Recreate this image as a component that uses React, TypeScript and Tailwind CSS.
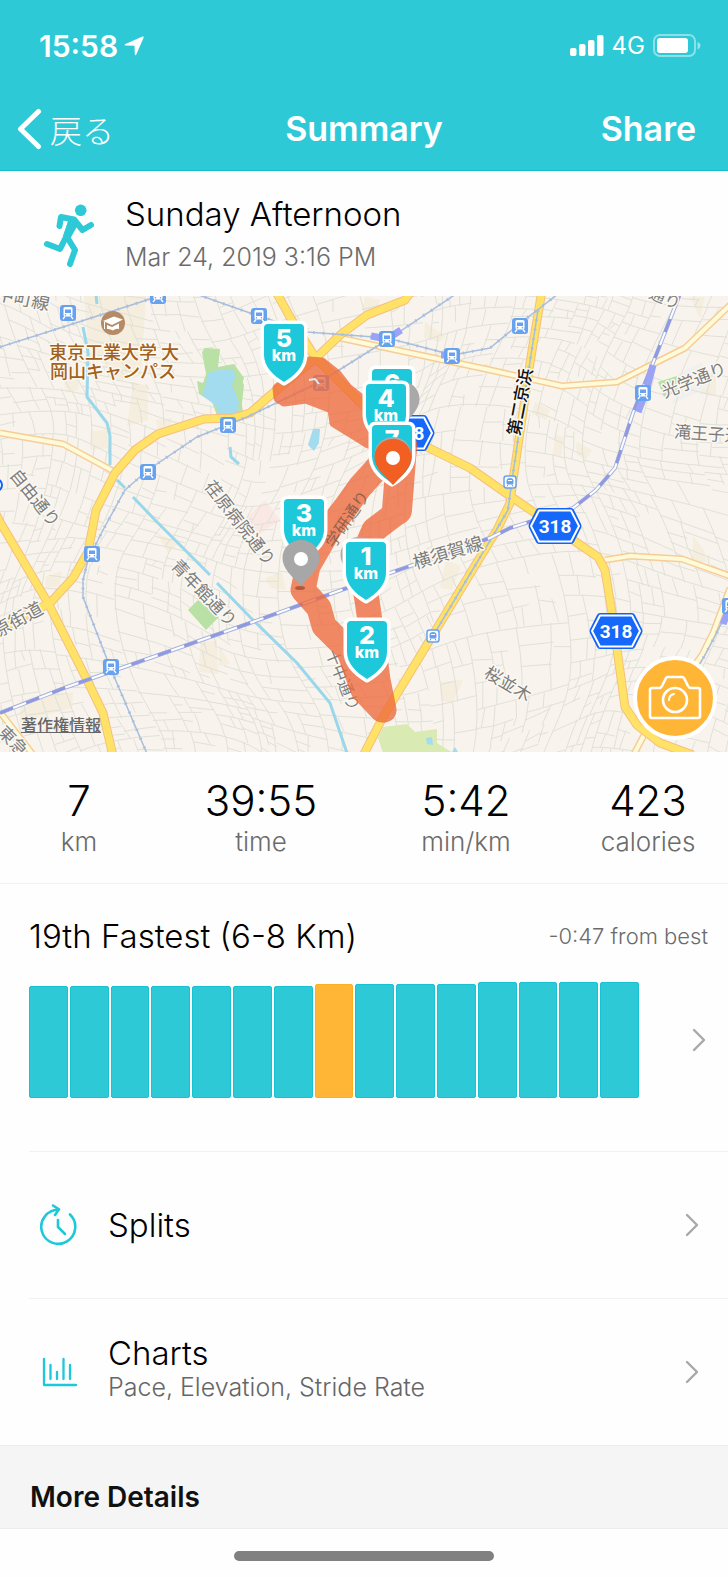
import type { ReactNode } from "react";

type Point = [number, number];

/* ---------- Street network: recursive blocks bent by a smooth field ---------- */

function makeRandom(seed: number) {
  let s = seed;
  return () => {
    s = (s * 1664525 + 1013904223) % 4294967296;
    return s / 4294967296;
  };
}

function warp(x: number, y: number): Point {
  const dx = 26 * Math.sin(y / 61 + x / 170) + 9 * Math.sin(x / 29 + 1.3);
  const dy = 30 * Math.sin(x / 83 - y / 210 + 0.6) + 8 * Math.cos(y / 31 + x / 57);
  return [x + dx, y + dy];
}

function buildStreets() {
  const random = makeRandom(77);
  const parts: string[] = [];
  const line = (x1: number, y1: number, x2: number, y2: number) => {
    const n = Math.max(1, Math.round(Math.hypot(x2 - x1, y2 - y1) / 16));
    let d = "";
    for (let i = 0; i <= n; i++) {
      const [x, y] = warp(x1 + ((x2 - x1) * i) / n, y1 + ((y2 - y1) * i) / n);
      d += `${i === 0 ? "M" : "L"}${x.toFixed(1)} ${y.toFixed(1)}`;
    }
    parts.push(d);
  };
  const split = (x: number, y: number, w: number, h: number) => {
    const limit = 15 + random() * 17;
    if (w < limit && h < limit) return;
    const t = 0.35 + random() * 0.3;
    const skew = (random() - 0.5) * 6;
    if (w > h) {
      line(x + w * t, y, x + w * t + skew, y + h * (random() < 0.15 ? 0.6 : 1));
      split(x, y, w * t, h);
      split(x + w * t, y, w * (1 - t), h);
    } else {
      line(x, y + h * t, x + w * (random() < 0.15 ? 0.6 : 1), y + h * t + skew);
      split(x, y, w, h * t);
      split(x, y + h * t, w, h * (1 - t));
    }
  };
  split(-60, 230, 860, 590);
  return parts.join("");
}

const streets = buildStreets();

/* ---------- Map data ---------- */

const mainRoads = [
  "M0 631L24 616L50 603L73 578L88 552L96 510L115 473L135 450L158 434L204 419L233 418L250 413L273 393L317 357L340 335L367 315L405 300L412 290",
  "M275 290L290 317L315 357L363 405L427 447L470 468L513 498L535 513L573 540L598 557L605 570L612 613L625 707L637 725L660 743L693 755",
  "M542 290L530 363L512 487L510 503L497 530L490 541L383 717L363 756",
  "M-4 514L0 522L48 603L87 680L103 713L113 756",
];

const sideRoads = [
  "M0 433L63 444L115 472",
  "M340 338L490 370L562 386L617 382L685 348L730 305",
  "M605 560L630 556L682 559L730 576",
  "M730 588L713 633L702 655L643 737L633 756",
  "M0 712L34 756",
];

const rivers = [
  "M96 294L97 304",
  "M83 327L88 352L87 397L107 423L110 436L110 465",
  "M117 480L125 488M133 497L155 520L210 575M217 583L250 617L297 663L330 703L348 756",
  "M230 447L231 457L239 464",
];

const rails = [
  "M0 347L60 328L150 299L160 294",
  "M196 294L250 313L307 332L387 338L453 355L490 348L518 325L558 294",
  "M456 294L387 340L320 382L247 417L197 437L148 470L125 490L103 530L88 560L83 580L83 597L110 667L148 756",
  "M538 310L524 400L512 480L508 510L494 534L433 636",
  "M730 606L713 640L700 664",
];

const jrLine =
  "M0 713L67 687L110 672L250 623L347 588L413 565L490 538L510 528L573 508L596 490L615 468L633 413L653 363L680 294";

const stations: Point[] = [
  [68, 313], [158, 296], [228, 425], [148, 472], [259, 316], [387, 339], [452, 356],
  [520, 326], [643, 393], [92, 554], [111, 667], [730, 606],
];

type Label = { text: string; x: number; y: number; angle: number; size: number };

const labels: Label[] = [
  { text: "自由通り", x: 35, y: 498, angle: 51, size: 17 },
  { text: "荏原病院通り", x: 240, y: 523, angle: 52, size: 17 },
  { text: "青年館通り", x: 204, y: 593, angle: 46, size: 17 },
  { text: "原街道", x: 18, y: 620, angle: -29, size: 18 },
  { text: "横須賀線", x: 448, y: 553, angle: -17, size: 18 },
  { text: "十中通り", x: 343, y: 680, angle: 68, size: 16 },
  { text: "桜並木", x: 508, y: 684, angle: 31, size: 17 },
  { text: "光学通り", x: 694, y: 380, angle: -22, size: 17 },
  { text: "滝王子通", x: 708, y: 434, angle: 4, size: 17 },
  { text: "中町線", x: 23, y: 299, angle: 12, size: 18 },
  { text: "通り", x: 665, y: 298, angle: 22, size: 16 },
  { text: "東急", x: 13, y: 741, angle: 46, size: 17 },
];

/* ---------- Map pieces ---------- */

function Station({ x, y }: { x: number; y: number }) {
  return (
    <g transform={`translate(${x} ${y})`}>
      <rect x="-8" y="-8" width="16" height="16" rx="3" fill="#68a2ee" />
      <path d="M-3-6H3Q4.500-6 4.500-4.500V2Q4.500 3.500 3 3.500H-3Q-4.500 3.500-4.500 2V-4.500Q-4.500-6-3-6Z" fill="#fff" />
      <rect x="-3" y="-3.500" width="6" height="3.500" fill="#68a2ee" />
      <circle cx="-2.500" cy="1.800" r=".8" fill="#68a2ee" />
      <circle cx="2.500" cy="1.800" r=".8" fill="#68a2ee" />
      <path d="M-3 3.500L-5 6M3 3.500L5 6" stroke="#fff" strokeWidth="1.300" />
    </g>
  );
}

function MetroStation({ x, y }: { x: number; y: number }) {
  return (
    <g transform={`translate(${x} ${y})`}>
      <rect x="-6" y="-6" width="12" height="12" rx="2.500" fill="#fff" stroke="#68a2ee" strokeWidth="1.500" />
      <path d="M-3.500 1V-1Q-3.500-4 0-4T3.500-1V1Q3.500 2.500 2 2.500H-2Q-3.500 2.500-3.500 1Z" fill="#68a2ee" />
      <path d="M-2-1.500H2" stroke="#fff" strokeWidth="1" />
      <path d="M-3 4.500L-2 2.500M3 4.500L2 2.500" stroke="#68a2ee" strokeWidth="1" />
    </g>
  );
}

function RouteShield({ x, y }: { x: number; y: number }) {
  return (
    <g transform={`translate(${x} ${y})`}>
      <path d="M-16-18H16Q18-18 19-16L26-2Q27 0 26 2L19 16Q18 18 16 18H-16Q-18 18-19 16L-26 2Q-27 0-26-2L-19-16Q-18-18-16-18Z" fill="#1263f5" />
      <path d="M-16-15.500H16L24 0L16 15.500H-16L-24 0Z" fill="#1568fa" stroke="#fff" strokeWidth="2" strokeLinejoin="round" />
      <text y="7" textAnchor="middle" className="fill-white font-[Roboto,sans-serif] text-[19px] font-bold">
        318
      </text>
    </g>
  );
}

function KmMarker({ x, y, n }: { x: number; y: number; n: number }) {
  return (
    <g transform={`translate(${x} ${y})`}>
      <path
        d="M-16 3H16Q20 3 20 7V34C20 46 10 55 0 61C-10 55-20 46-20 34V7Q-20 3-16 3Z"
        fill="#1cc8d9"
        stroke="#fff"
        strokeWidth="7"
        strokeLinejoin="round"
        paintOrder="stroke"
      />
      <text y="26" textAnchor="middle" className="fill-white text-[25px] font-extrabold">
        {n}
      </text>
      <text y="40" textAnchor="middle" className="fill-white text-[16px] font-extrabold">
        km
      </text>
    </g>
  );
}

function Pin({ x, y, color }: { x: number; y: number; color: string }) {
  return (
    <g transform={`translate(${x} ${y})`}>
      <path d="M0-19C10.500-19 18.500-11 18.500-1C18.500 10 9 17 0 27C-9 17-18.500 10-18.500-1C-18.500-11-10.500-19 0-19Z" fill={color} />
      <circle r="7" fill="#fff" />
    </g>
  );
}

function RouteMap() {
  return (
    <svg
      viewBox="0 296 728 456"
      className="block h-auto w-full bg-[#f8f4ed] font-[Inter,'Noto_Sans_CJK_JP',sans-serif]"
      role="img"
      aria-label="Route map"
    >
      <g fill="#f5eddd">
        <path d="M84 296H146L141 376L118 381L88 345Z" />
        <path d="M133 382L148 386V420L127 426Z" />
        <path d="M64 380L80 376L78 390L66 393Z" />
        <path d="M92 431L108 430L109 448L90 450Z" />
        <path d="M156 420L172 418L170 428L158 430Z" />
        <path d="M200 643L217 640L218 674L199 672ZM219 645L230 664L219 666Z" />
        <path d="M156 532L178 544L168 553Z" />
        <path d="M20 700L73 692L72 708L20 722Z" />
        <path d="M365 297L380 300L376 312L362 310ZM425 322L445 336L440 342L424 338Z" />
        <path d="M535 402L550 410L546 420L532 414ZM576 442L592 450L586 460L577 455ZM555 435L564 437L561 457L553 455Z" />
        <path d="M440 682L463 680L452 704L441 700ZM446 560L461 566L452 590L440 588Z" />
        <path d="M693 536L704 550L707 562L692 562ZM700 375L716 372L716 396L700 394ZM690 297L705 297L700 318Z" />
        <path d="M265 578L282 572L286 590L270 588ZM45 577L62 571L60 586L46 588Z" />
      </g>
      <path d="M247 517L265 500L280 520L258 535Z" fill="#f9e8e4" />
      <path d="M678 374L702 362L708 388L672 404Z" fill="#f0f0ee" />
      <path d={streets} fill="none" stroke="#e0e1d8" strokeWidth="1" strokeLinejoin="round" />

      <g fill="#b9e0a5">
        <path d="M202 352L205 348L220 349L218 367L234 364L244 378L240 390L243 415L218 418L212 402L199 394L197 381L203 383L206 374Z" />
        <path d="M238 372L244 385L241 412L238 400Z" />
        <path d="M658 382L677 376L682 390L664 397Z" />
        <path d="M188 610L198 600L219 617L206 630Z" />
      </g>
      <path d="M378 738L383 727L407 724L415 732L437 729V743L458 756H384Z" fill="#d9ebb2" />
      <g fill="#a3dbef">
        <path d="M208 374L212 371L232 369L236 376L232 385L239 402L237 415H219L216 406L202 395L205 386Z" />
        <path d="M313 429H320L319 443L314 451L308 445Z" />
        <path d="M426 738L432 737L433 745L427 744ZM452 752L455 747L458 752Z" />
      </g>
      <g fill="none" stroke="#9ad7ea" strokeWidth="3">
        {rivers.map((d) => (
          <path key={d} d={d} />
        ))}
      </g>

      <g fill="none" stroke="#f6cd98" strokeWidth="7" strokeLinejoin="round">
        {sideRoads.map((d) => (
          <path key={d} d={d} />
        ))}
      </g>
      <g fill="none" stroke="#fffbd9" strokeWidth="4" strokeLinejoin="round">
        {sideRoads.map((d) => (
          <path key={d} d={d} />
        ))}
      </g>
      <g fill="none" stroke="#f5bf80" strokeWidth="9" strokeLinejoin="round">
        {mainRoads.map((d) => (
          <path key={d} d={d} />
        ))}
      </g>
      <g fill="none" stroke="#ffe266" strokeWidth="7" strokeLinejoin="round">
        {mainRoads.map((d) => (
          <path key={d} d={d} />
        ))}
      </g>

      <g fill="none" stroke="#a9bedd" strokeWidth="1.500">
        {rails.map((d) => (
          <path key={d} d={d} />
        ))}
      </g>
      <g fill="none" stroke="#a9bedd" strokeWidth="3" strokeDasharray="1.500 8">
        {rails.map((d) => (
          <path key={d} d={d} />
        ))}
      </g>
      <path d={jrLine} fill="none" stroke="#a6b2de" strokeWidth="4" />
      <path d={jrLine} fill="none" stroke="#fff" strokeWidth="2" />
      <path d={jrLine} fill="none" stroke="#9098e0" strokeWidth="3" strokeDasharray="14 14" />
      <path d="M653 365L646 392L638 412" stroke="#9ba3f5" strokeWidth="7" fill="none" />
      <path d="M371 336L387 339L401 330" stroke="#9ba3f5" strokeWidth="7" fill="none" />
      <path d="M441 355L452 355M728 612L723 624" stroke="#9ba3f5" strokeWidth="7" fill="none" />

      {stations.map(([x, y]) => (
        <Station key={`${x}-${y}`} x={x} y={y} />
      ))}
      <Station x={321} y={383} />
      <MetroStation x={510} y={482} />
      <MetroStation x={433} y={636} />

      <circle cx="113" cy="323" r="12" fill="#b58a64" />
      <path d="M103 321L114 316.500L123 319.500L112 325Z" fill="#fff" />
      <path d="M107 325L112 327L119 323.500L119 329Q116 328 113 330.500Q110 328.500 107 329Z" fill="#fff" />
      <path d="M104.500 322V329" stroke="#fff" strokeWidth="1" />
      <g
        textAnchor="middle"
        fill="#a1611d"
        stroke="#fdf9f0"
        strokeWidth="3"
        paintOrder="stroke"
        strokeLinejoin="round"
        className="font-['Noto_Sans_CJK_JP',sans-serif] text-[18px] font-medium"
      >
        <text x="114" y="359">東京工業大学 大</text>
        <text x="113" y="378">岡山キャンパス</text>
      </g>

      <circle cx="-4" cy="485" r="6" fill="#fff" stroke="#1263f5" strokeWidth="2" />
      <RouteShield x={408} y={433} />
      <RouteShield x={555} y={526} />
      <RouteShield x={616} y={631} />

      <g
        textAnchor="middle"
        fill="#7d7d7d"
        stroke="#fbf8f2"
        strokeWidth="3"
        paintOrder="stroke"
        strokeLinejoin="round"
        className="font-['Noto_Sans_CJK_JP',sans-serif]"
      >
        {labels.map((l) => (
          <text key={l.text} transform={`translate(${l.x} ${l.y}) rotate(${l.angle})`} y="6" fontSize={l.size}>
            {l.text}
          </text>
        ))}
        <text transform="translate(520 402) rotate(-79)" y="6" fill="#111" className="text-[17px] font-medium">
          第二京浜
        </text>
      </g>

      <g opacity=".78" fill="none" stroke="#ee6a3d" strokeLinecap="round" strokeLinejoin="round">
        <path
          d="M277 388L290 378L309 361L322 362L337 374L348 388L363 400L385 425L400 452L368 444L352 434L334 423L332 409L306 399L284 402L278 398Z"
          fill="#ee6a3d"
          strokeWidth="9"
        />
        <path d="M388 456L360 487L345 508L331 526L308 566L303 590L319 608L324 626L349 651L363 690L382 710" strokeWidth="25" />
        <path d="M405 446L398 485L395 514L374 530L360 562L367 600L374 650L378 680L384 710" strokeWidth="25" />
        <path d="M402 446L397 510" strokeWidth="30" />
      </g>
      <path d="M309 380L315 379L319 384" fill="none" stroke="#d9eef5" strokeWidth="2" />
      <text
        transform="translate(347 519) rotate(-56)"
        y="6"
        textAnchor="middle"
        fill="#6b5046"
        opacity=".7"
        className="font-['Noto_Sans_CJK_JP',sans-serif] text-[16px]"
      >
        学研通り
      </text>

      <KmMarker x={284} y={321} n={5} />
      <KmMarker x={392} y={366} n={6} />
      <Pin x={401} y={400} color="#a9a9a9" />
      <KmMarker x={386} y={381} n={4} />
      <KmMarker x={392} y={422} n={7} />
      <Pin x={393} y={456} color="#a9a9a9" />
      <Pin x={393} y={458} color="#f15f22" />
      <KmMarker x={304} y={496} n={3} />
      <ellipse cx="300" cy="588" rx="5" ry="2" fill="#ad5b3e" />
      <Pin x={301} y={559} color="#a7a7a7" />
      <Pin x={359} y={556} color="#a9a9a9" />
      <KmMarker x={366} y={539} n={1} />
      <KmMarker x={367} y={618} n={2} />
    </svg>
  );
}

/* ---------- Icons ---------- */

function RunnerIcon() {
  return (
    <svg viewBox="0 0 50 64" className="h-16 w-[50px] shrink-0" fill="none" stroke="#2ec9d7" strokeWidth="6" strokeLinecap="round" strokeLinejoin="round" aria-hidden="true">
      <circle cx="36.700" cy="7.300" r="5.800" fill="#2ec9d7" stroke="none" />
      <path d="M15.500 23L17 14L30 16.500L38.500 27L47 22" />
      <path d="M20 13.500L33 15.500L35 20L25.500 37L19 33L24 18Z" fill="#2ec9d7" stroke="none" />
      <path d="M27 20L22 34L16 46L3 41" />
      <path d="M23 34L31 47L26 61" />
    </svg>
  );
}

function Chevron() {
  return (
    <svg viewBox="0 0 14 24" className="h-6 w-3.5 shrink-0" fill="none" stroke="#a8a8a8" strokeWidth="2.400" strokeLinecap="round" strokeLinejoin="round" aria-hidden="true">
      <path d="M2 2L12 12L2 22" />
    </svg>
  );
}

function SplitsIcon() {
  return (
    <svg viewBox="0 0 38 42" className="h-[42px] w-[38px]" fill="none" stroke="#1cc8d9" strokeWidth="2.600" strokeLinecap="round" strokeLinejoin="round" aria-hidden="true">
      <path d="M31 10.500A17 17 0 1 1 19 5.800" />
      <path d="M14 1.500L20 5.300L16 11" />
      <path d="M19 16V23L26 30" />
    </svg>
  );
}

function ChartsIcon() {
  return (
    <svg viewBox="-3 0 38 30" className="h-[30px] w-[38px]" fill="none" stroke="#1cc8d9" strokeWidth="2.300" strokeLinecap="round" strokeLinejoin="round" aria-hidden="true">
      <path d="M2 2V28H34M8.500 8V22M15 15V22M21.500 2V22M28 8V22" />
    </svg>
  );
}

function CameraIcon() {
  return (
    <svg viewBox="0 0 54 46" className="h-[46px] w-[54px]" fill="none" stroke="#fff" strokeWidth="2.600" strokeLinecap="round" strokeLinejoin="round" aria-hidden="true">
      <path d="M4 13H11Q13 13 14 11L17 5Q18 2 20 2H34Q36 2 37 5L40 11Q41 13 43 13H50Q52 13 52 15V41Q52 43 50 43H4Q2 43 2 41V15Q2 13 4 13Z" />
      <circle cx="27" cy="25" r="12" />
      <path d="M21 25Q21 20 26 19" strokeWidth="2" />
    </svg>
  );
}

function SignalIcon() {
  return (
    <svg viewBox="0 0 34 22" className="h-[22px] w-[34px]" fill="#fff" aria-hidden="true">
      <rect x="0" y="13" width="6.500" height="8" rx="2" />
      <rect x="9" y="9" width="6.500" height="12" rx="2" />
      <rect x="18" y="5" width="6.500" height="16" rx="2" />
      <rect x="27" y="0" width="6.500" height="21" rx="2" />
    </svg>
  );
}

function BatteryIcon() {
  return (
    <svg viewBox="0 0 48 24" className="h-6 w-12" aria-hidden="true">
      <rect x="1" y="1" width="41" height="21" rx="6" fill="none" stroke="#fff" strokeOpacity=".45" strokeWidth="2" />
      <rect x="4" y="4" width="31" height="15" rx="3" fill="#fff" />
      <path d="M44.500 8Q47.500 9 47.500 11.500T44.500 15.500Z" fill="#fff" fillOpacity=".5" />
    </svg>
  );
}

/* ---------- Page ---------- */

const stats = [
  { value: "7", unit: "km" },
  { value: "39:55", unit: "time" },
  { value: "5:42", unit: "min/km" },
  { value: "423", unit: "calories" },
];

const runs = [112, 112, 112, 112, 112, 112, 112, 114, 114, 114, 114, 116, 116, 116, 116];
const currentRun = 7;

function DetailRow({ icon, title, note }: { icon: ReactNode; title: string; note?: string }) {
  return (
    <a href="#" className="ml-[29px] flex h-[147px] items-center border-t border-[#f1f1f1] pr-[29px] pl-2.5">
      <span className="flex w-[69px] shrink-0">{icon}</span>
      <span className={note ? "flex grow flex-col pb-2.5" : "flex grow flex-col"}>
        <span className="text-[33px] leading-10 font-light">{title}</span>
        {note && <span className="text-[25px] leading-7 font-light text-[#666]">{note}</span>}
      </span>
      <Chevron />
    </a>
  );
}

export default function App() {
  return (
    <div className="flex min-h-screen flex-col bg-[#fefefe] font-[Inter,'Noto_Sans_CJK_JP',sans-serif] text-black">
      <header className="border-b border-[#14c0d0] bg-[#2ec9d7] text-white">
        <div className="flex items-center justify-between pt-[26px] pr-[27px] pl-[39px]">
          <div className="flex items-center gap-1.5">
            <span className="text-[30px] leading-10 font-semibold">15:58</span>
            <svg viewBox="0 0 20 20" className="h-5 w-5" fill="#fff" aria-hidden="true">
              <path d="M18.500 .6Q20.200 0 19.600 1.700L12.300 18.500Q11.300 20.300 10.800 18.300L10.500 9.700L1.700 9.500Q-.6 9 1.500 7.900Z" />
            </svg>
          </div>
          <div className="flex items-center gap-2">
            <SignalIcon />
            <span className="text-[24px] leading-10">4G</span>
            <BatteryIcon />
          </div>
        </div>
        <nav className="grid grid-cols-[1fr_auto_1fr] items-center pt-[42px] pb-5">
          <button type="button" className="flex items-center gap-[7px] justify-self-start pl-[17px] text-[32px] leading-7 font-light">
            <svg viewBox="0 0 26 42" className="h-[42px] w-[26px]" fill="none" stroke="#fff" strokeWidth="5" strokeLinecap="round" strokeLinejoin="round" aria-hidden="true">
              <path d="M21.500 3.500L3.500 21L21.500 38.500" />
            </svg>
            <span className="font-['Noto_Sans_CJK_JP',sans-serif]">戻る</span>
          </button>
          <h1 className="text-[34px] leading-7 font-semibold">Summary</h1>
          <button type="button" className="justify-self-end pr-8 text-[34px] leading-7 font-semibold">
            Share
          </button>
        </nav>
      </header>

      <section className="flex items-center gap-[31px] pt-[21px] pb-[18px] pl-11">
        <RunnerIcon />
        <div>
          <h2 className="text-[33px] leading-[44px] font-light">Sunday Afternoon</h2>
          <p className="text-[25px] leading-[42px] font-light text-[#6b6b6b]">Mar 24, 2019 3:16 PM</p>
        </div>
      </section>

      <section className="relative">
        <RouteMap />
        <a href="#" className="absolute bottom-4 left-[21px] font-['Noto_Sans_CJK_JP',sans-serif] text-[16px] leading-6 font-medium text-[#666] underline">
          著作権情報
        </a>
        <button
          type="button"
          aria-label="Add photo"
          className="absolute right-[11px] bottom-3 flex size-[84px] items-center justify-center rounded-full border-4 border-white bg-[#ffb637]"
        >
          <CameraIcon />
        </button>
      </section>

      <dl className="grid grid-cols-[158fr_206fr_204fr_160fr] border-b border-[#f1f1f1] pt-6 pb-[25px] text-center">
        {stats.map((s) => (
          <div key={s.unit} className="flex flex-col-reverse">
            <dt className="text-[26px] leading-8 font-light text-[#6b6b6b]">{s.unit}</dt>
            <dd className="text-[42px] leading-[50px] font-light">{s.value}</dd>
          </div>
        ))}
      </dl>

      <section className="pb-[53px]">
        <div className="flex items-center justify-between pt-8 pr-5 pl-[29px]">
          <h2 className="text-[33px] leading-10 font-light">19th Fastest (6-8 Km)</h2>
          <p className="text-[22px] font-light text-[#6b6b6b]">-0:47 from best</p>
        </div>
        <a href="#" aria-label="Compare runs" className="mt-[26px] flex items-center justify-between pr-[22px] pl-[29px]">
          <span className="mr-[53px] flex grow items-end gap-0.5">
            {runs.map((height, i) => (
              <span
                key={i}
                className={
                  i === currentRun
                    ? "grow rounded-xs border border-[#ffb021] bg-[#ffb637]"
                    : "grow rounded-xs border border-[#17c2d2] bg-[#2ec9d7]"
                }
                style={{ height }}
              />
            ))}
          </span>
          <Chevron />
        </a>
      </section>

      <DetailRow icon={<SplitsIcon />} title="Splits" />
      <DetailRow icon={<ChartsIcon />} title="Charts" note="Pace, Elevation, Stride Rate" />

      <h2 className="border-y border-[#ececec] bg-[#f5f5f5] pt-[31px] pb-[11px] pl-[30px] text-[28px] leading-10 font-semibold text-[#111]">
        More Details
      </h2>
      <div className="mx-auto mt-[22px] mb-4 h-[10px] w-[260px] rounded-full bg-[#808080]" />
    </div>
  );
}
